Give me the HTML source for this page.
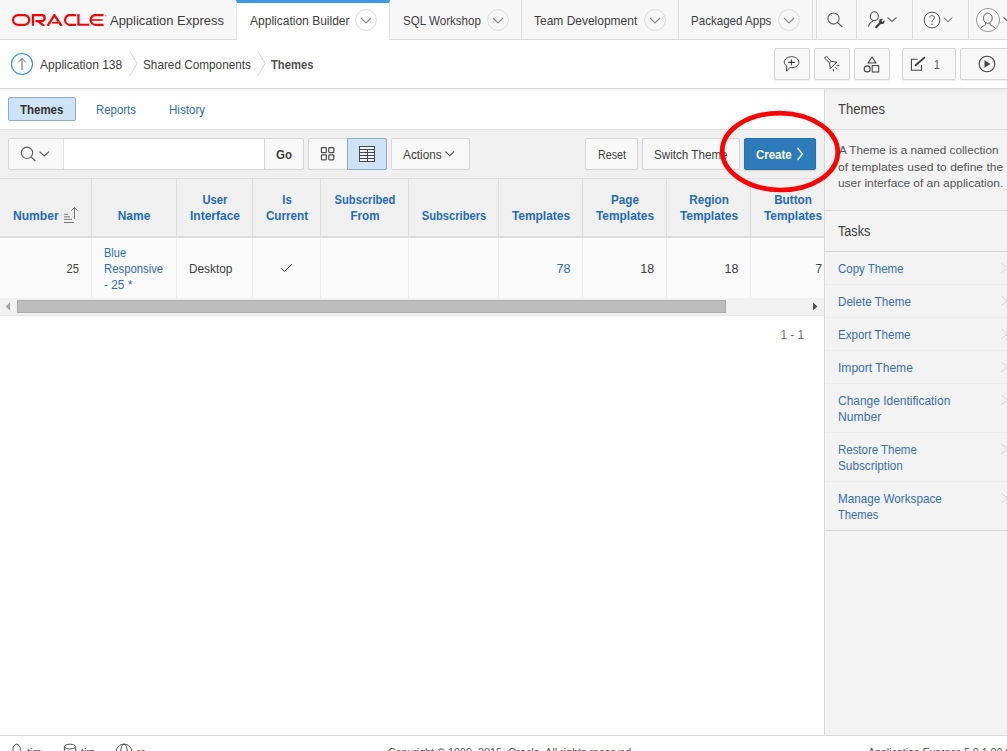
<!DOCTYPE html><html><head><meta charset="utf-8"><style>
html,body{margin:0;padding:0;width:1007px;height:751px;overflow:hidden;background:#fff;font-family:"Liberation Sans",sans-serif;}
.t{position:absolute;white-space:nowrap;}
.r{position:absolute;box-sizing:border-box;}
svg.r{overflow:visible}
</style></head><body>
<div class="r" style="left:0px;top:0px;width:1007px;height:40px;background:#f7f7f7;border-bottom:1px solid #dcdcdc"></div>
<svg class="r" style="left:12px;top:14px;" width="93" height="12" viewBox="0 0 93 12"><clipPath id="oc"><rect x="0" y="0" width="96" height="11.9"/></clipPath><g fill="none" stroke="#f80000" stroke-width="2.25" clip-path="url(#oc)">
<rect x="1.1" y="1.1" width="16.1" height="9.7" rx="5.2" ry="4.85"/>
<path d="M20.9 11.8 V1.05 H29.7 A2.975 2.975 0 0 1 29.7 7 H23.5"/>
<path d="M25.2 6.6 L32.2 11.8" stroke-width="2.3"/>
<path d="M35.6 11.8 L42.4 1.2 L49.6 11.8" stroke-width="2.4" stroke-linejoin="miter"/>
<path d="M40.2 8.75 H46.8" stroke-width="1.7"/>
<path d="M63.9 1.05 H57.9 A4.85 4.85 0 0 0 57.9 10.75 H63.9"/>
<path d="M66.45 0 V10.75 H77.2" stroke-width="2.2"/>
<path d="M91.6 1.05 H83.5 A4.85 4.85 0 0 0 83.5 10.75 H91.6"/>
<path d="M79.5 6 H90.6" stroke-width="1.6"/>
</g><circle cx="93.8" cy="1.8" r="0.8" fill="#f88"/></svg>
<div class="t" style="left:110.00px;top:14px;font-size:13.69px;line-height:13.69px;font-weight:400;color:#3d3d3d;transform:scaleX(0.9482);transform-origin:0 0;">Application Express</div>
<div class="r" style="left:236px;top:0px;width:154px;height:40px;background:#fff;border-top:3px solid #3b98e4;border-left:1px solid #e3e3e3;border-right:1px solid #e3e3e3"></div>
<div class="t" style="left:249.50px;top:15px;font-size:12.57px;line-height:12.57px;font-weight:400;color:#404040;transform:scaleX(0.9566);transform-origin:0 0;">Application Builder</div>
<svg class="r" style="left:353.8px;top:7.800000000000001px;" width="24" height="24" viewBox="0 0 24 24"><circle cx="12" cy="12" r="10.4" fill="none" stroke="#dcdcdc" stroke-width="1"/><path d="M7 10 L12 15 L17 10" fill="none" stroke="#8a8a8a" stroke-width="1.1"/></svg>
<div class="r" style="left:521px;top:0px;width:1px;height:39px;background:#dedede"></div>
<div class="r" style="left:678px;top:0px;width:1px;height:39px;background:#dedede"></div>
<div class="r" style="left:812px;top:0px;width:1px;height:39px;background:#dedede"></div>
<div class="r" style="left:816px;top:0px;width:1px;height:39px;background:#dedede"></div>
<div class="r" style="left:856px;top:0px;width:1px;height:39px;background:#dedede"></div>
<div class="r" style="left:912px;top:0px;width:1px;height:39px;background:#dedede"></div>
<div class="r" style="left:968px;top:0px;width:1px;height:39px;background:#dedede"></div>
<div class="t" style="left:402.70px;top:15px;font-size:12.57px;line-height:12.57px;font-weight:400;color:#404040;transform:scaleX(0.9227);transform-origin:0 0;">SQL Workshop</div>
<svg class="r" style="left:486px;top:7.800000000000001px;" width="24" height="24" viewBox="0 0 24 24"><circle cx="12" cy="12" r="10.4" fill="none" stroke="#dcdcdc" stroke-width="1"/><path d="M7 10 L12 15 L17 10" fill="none" stroke="#8a8a8a" stroke-width="1.1"/></svg>
<div class="t" style="left:534.10px;top:15px;font-size:12.57px;line-height:12.57px;font-weight:400;color:#404040;transform:scaleX(0.9539);transform-origin:0 0;">Team Development</div>
<svg class="r" style="left:642.9px;top:7.800000000000001px;" width="24" height="24" viewBox="0 0 24 24"><circle cx="12" cy="12" r="10.4" fill="none" stroke="#dcdcdc" stroke-width="1"/><path d="M7 10 L12 15 L17 10" fill="none" stroke="#8a8a8a" stroke-width="1.1"/></svg>
<div class="t" style="left:690.80px;top:15px;font-size:12.57px;line-height:12.57px;font-weight:400;color:#404040;transform:scaleX(0.9203);transform-origin:0 0;">Packaged Apps</div>
<svg class="r" style="left:777px;top:7.800000000000001px;" width="24" height="24" viewBox="0 0 24 24"><circle cx="12" cy="12" r="10.4" fill="none" stroke="#dcdcdc" stroke-width="1"/><path d="M7 10 L12 15 L17 10" fill="none" stroke="#8a8a8a" stroke-width="1.1"/></svg>
<svg class="r" style="left:825px;top:10px;" width="20" height="20" viewBox="0 0 20 20"><circle cx="8.5" cy="8.5" r="5.6" fill="none" stroke="#5a5a5a" stroke-width="1.05"/><path d="M12.5 12.5 L17.2 16.8" stroke="#5a5a5a" stroke-width="1.15"/></svg>
<svg class="r" style="left:866px;top:10px;" width="34" height="20" viewBox="0 0 34 20"><ellipse cx="8.4" cy="6.2" rx="4" ry="4.4" fill="none" stroke="#555" stroke-width="1.1"/><path d="M2.6 16.8 C2.8 13.6 4.6 12 7 11.2" fill="none" stroke="#555" stroke-width="1.1"/><path d="M10.3 17 L15 12.3" stroke="#3f3f3f" stroke-width="2.3" stroke-linecap="round"/><circle cx="15.8" cy="11.4" r="2.7" fill="#3f3f3f"/><path d="M15.9 11.3 L19 8.2" stroke="#f7f7f7" stroke-width="1.7"/><path d="M21.5 7.5 L26 11.5 L30.5 7.5" fill="none" stroke="#666" stroke-width="1.1"/></svg>
<svg class="r" style="left:920px;top:8px;" width="40" height="24" viewBox="0 0 40 24"><circle cx="12" cy="12" r="7.9" fill="none" stroke="#555" stroke-width="1"/><path d="M9.6 9.6 C9.6 6.9 14.4 6.9 14.4 9.6 C14.4 11.4 12 11.6 12 13.6 V14.3" fill="none" stroke="#555" stroke-width="1"/><circle cx="12" cy="16.3" r="0.7" fill="#555"/><path d="M23.8 9.5 L28 13.6 L32.3 9.5" fill="none" stroke="#555" stroke-width="1"/></svg>
<svg class="r" style="left:974px;top:6px;" width="40" height="28" viewBox="0 0 40 28"><circle cx="14" cy="14" r="11.6" fill="none" stroke="#9a9a9a" stroke-width="1"/><ellipse cx="13.8" cy="12.2" rx="4.4" ry="5.1" fill="none" stroke="#666" stroke-width="1"/><path d="M11.6 17 V18.6 C10.6 19.8 7.6 20.2 6.3 22.6 M16 17 V18.6 C17 19.8 20 20.2 21.3 22.6" fill="none" stroke="#666" stroke-width="1"/><path d="M29.5 11.5 L34 15.5 L38.5 11.5" fill="none" stroke="#666" stroke-width="1.1"/></svg>
<div class="r" style="left:0px;top:88px;width:1007px;height:1px;background:#d8d8d8"></div>
<div class="r" style="left:0px;top:89px;width:1007px;height:4px;background:linear-gradient(rgba(0,0,0,0.035),rgba(0,0,0,0))"></div>
<svg class="r" style="left:10px;top:52px;" width="24" height="24" viewBox="0 0 24 24"><circle cx="12" cy="12" r="10.5" fill="none" stroke="#3d95e0" stroke-width="1.2"/><path d="M12 18 V6.5 M8 10.5 L12 6.5 L16 10.5" fill="none" stroke="#666" stroke-width="1"/></svg>
<div class="t" style="left:40.00px;top:59px;font-size:12.57px;line-height:12.57px;font-weight:400;color:#404040;transform:scaleX(0.9574);transform-origin:0 0;">Application 138</div>
<svg class="r" style="left:128.5px;top:51px;" width="10" height="26" viewBox="0 0 10 26"><path d="M1 0.5 L8 12.5 L1 24.5" fill="none" stroke="#d6d6d6" stroke-width="1"/></svg>
<div class="t" style="left:143.00px;top:59px;font-size:12.57px;line-height:12.57px;font-weight:400;color:#404040;transform:scaleX(0.9367);transform-origin:0 0;">Shared Components</div>
<svg class="r" style="left:257px;top:51px;" width="10" height="26" viewBox="0 0 10 26"><path d="M1 0.5 L8 12.5 L1 24.5" fill="none" stroke="#d6d6d6" stroke-width="1"/></svg>
<div class="t" style="left:271.30px;top:59px;font-size:12.57px;line-height:12.57px;font-weight:700;color:#505050;transform:scaleX(0.8946);transform-origin:0 0;">Themes</div>
<div class="r" style="left:774px;top:48px;width:36px;height:32px;background:#f8f8f8;border:1px solid #d4d4d4;border-radius:2px;box-shadow:0 1px 1px rgba(0,0,0,0.06)"></div>
<div class="r" style="left:814px;top:48px;width:36px;height:32px;background:#f8f8f8;border:1px solid #d4d4d4;border-radius:2px;box-shadow:0 1px 1px rgba(0,0,0,0.06)"></div>
<div class="r" style="left:854px;top:48px;width:36px;height:32px;background:#f8f8f8;border:1px solid #d4d4d4;border-radius:2px;box-shadow:0 1px 1px rgba(0,0,0,0.06)"></div>
<div class="r" style="left:902px;top:48px;width:54px;height:32px;background:#f8f8f8;border:1px solid #d4d4d4;border-radius:2px;box-shadow:0 1px 1px rgba(0,0,0,0.06)"></div>
<div class="r" style="left:960px;top:48px;width:52px;height:32px;background:#f8f8f8;border:1px solid #d4d4d4;border-radius:2px;box-shadow:0 1px 1px rgba(0,0,0,0.06)"></div>
<svg class="r" style="left:780px;top:52px;" width="24" height="24" viewBox="0 0 24 24"><path d="M9.8 15.6 C10.4 15.7 11 15.7 11.6 15.7 C15.6 15.7 18.9 13.2 18.9 10.2 C18.9 7.2 15.6 4.7 11.6 4.7 C7.6 4.7 4.3 7.2 4.3 10.2 C4.3 11.8 5.3 13.1 6.8 14 L6.5 19.2 Z" fill="none" stroke="#444" stroke-width="1" stroke-linejoin="round"/><path d="M11.4 7.5 V13.2 M8.2 10.4 H14.7" stroke="#3a3a3a" stroke-width="1.1"/></svg>
<svg class="r" style="left:820px;top:52px;" width="24" height="24" viewBox="0 0 24 24"><path d="M4.3 6 L6.6 4.3 L11.2 9.4 L16.7 10.1 L10.3 16.5 L9.6 10.9 Z M9.6 10.9 L11.2 9.4" fill="none" stroke="#444" stroke-width="1" stroke-linejoin="round"/><path d="M16.5 13.2 L19.5 13.5 M15.3 15.2 L17.3 17.3 M13.2 17 L13.6 19.5" stroke="#444" stroke-width="1"/></svg>
<svg class="r" style="left:860px;top:52px;" width="24" height="24" viewBox="0 0 24 24"><path d="M12 5 L16 11 H8 Z" fill="none" stroke="#444" stroke-width="1.1" stroke-linejoin="round"/><circle cx="7.2" cy="16.9" r="3" fill="none" stroke="#444" stroke-width="1.1"/><rect x="12.2" y="13.6" width="6.5" height="6.4" fill="none" stroke="#444" stroke-width="1.1"/></svg>
<svg class="r" style="left:908px;top:52px;" width="24" height="24" viewBox="0 0 24 24"><path d="M9.6 7.3 H3.4 V18.3 H13.5 V12.9" fill="none" stroke="#444" stroke-width="1.1"/><path d="M7.6 13.3 L16.4 5.6" stroke="#3a3a3a" stroke-width="1.8" stroke-linecap="round"/></svg>
<div class="t" style="left:934.20px;top:59px;font-size:12.57px;line-height:12.57px;font-weight:400;color:#555;transform:scaleX(0.8153);transform-origin:0 0;">1</div>
<svg class="r" style="left:975px;top:52px;" width="24" height="24" viewBox="0 0 24 24"><circle cx="12" cy="12" r="7.8" fill="none" stroke="#444" stroke-width="1.1"/><path d="M9.5 8.3 L15.5 12 L9.5 15.7 Z" fill="#444"/></svg>
<div class="r" style="left:824px;top:89px;width:183px;height:646px;background:#f3f3f3;border-left:1px solid #d9d9d9"></div>
<div class="r" style="left:825px;top:89px;width:182px;height:4px;background:linear-gradient(rgba(0,0,0,0.035),rgba(0,0,0,0))"></div>
<div class="t" style="left:837.70px;top:102px;font-size:14.53px;line-height:14.53px;font-weight:400;color:#404040;transform:scaleX(0.8973);transform-origin:0 0;">Themes</div>
<div class="r" style="left:825px;top:129px;width:182px;height:1px;background:#dcdcdc"></div>
<div class="t" style="left:838.50px;top:145px;font-size:11.45px;line-height:11.45px;font-weight:400;color:#555;transform:scaleX(1.0249);transform-origin:0 0;">A Theme is a named collection</div>
<div class="t" style="left:837.50px;top:162px;font-size:11.45px;line-height:11.45px;font-weight:400;color:#555;transform:scaleX(1.0563);transform-origin:0 0;">of templates used to define the</div>
<div class="t" style="left:837.50px;top:178px;font-size:11.45px;line-height:11.45px;font-weight:400;color:#555;transform:scaleX(1.0394);transform-origin:0 0;">user interface of an application.</div>
<div class="r" style="left:825px;top:210px;width:182px;height:1px;background:#dcdcdc"></div>
<div class="t" style="left:837.70px;top:224px;font-size:14.25px;line-height:14.25px;font-weight:400;color:#404040;transform:scaleX(0.8867);transform-origin:0 0;">Tasks</div>
<div class="r" style="left:825px;top:251px;width:182px;height:1px;background:#d8d8d8"></div>
<div class="t" style="left:837.50px;top:263px;font-size:12.43px;line-height:12.43px;font-weight:400;color:#3a6eb5;transform:scaleX(0.9234);transform-origin:0 0;">Copy Theme</div>
<svg class="r" style="left:999px;top:260px;" width="10" height="16" viewBox="0 0 10 16"><path d="M2.4 3.2 L8.2 8 L2.4 12.7" fill="none" stroke="#d2d2d2" stroke-width="1"/></svg>
<div class="r" style="left:825px;top:284px;width:182px;height:1px;background:#ececec"></div>
<div class="t" style="left:837.50px;top:296px;font-size:12.43px;line-height:12.43px;font-weight:400;color:#3a6eb5;transform:scaleX(0.9364);transform-origin:0 0;">Delete Theme</div>
<svg class="r" style="left:999px;top:293px;" width="10" height="16" viewBox="0 0 10 16"><path d="M2.4 3.2 L8.2 8 L2.4 12.7" fill="none" stroke="#d2d2d2" stroke-width="1"/></svg>
<div class="r" style="left:825px;top:317px;width:182px;height:1px;background:#ececec"></div>
<div class="t" style="left:837.50px;top:329px;font-size:12.43px;line-height:12.43px;font-weight:400;color:#3a6eb5;transform:scaleX(0.9314);transform-origin:0 0;">Export Theme</div>
<svg class="r" style="left:999px;top:326px;" width="10" height="16" viewBox="0 0 10 16"><path d="M2.4 3.2 L8.2 8 L2.4 12.7" fill="none" stroke="#d2d2d2" stroke-width="1"/></svg>
<div class="r" style="left:825px;top:350px;width:182px;height:1px;background:#ececec"></div>
<div class="t" style="left:837.50px;top:362px;font-size:12.43px;line-height:12.43px;font-weight:400;color:#3a6eb5;transform:scaleX(0.9709);transform-origin:0 0;">Import Theme</div>
<svg class="r" style="left:999px;top:359px;" width="10" height="16" viewBox="0 0 10 16"><path d="M2.4 3.2 L8.2 8 L2.4 12.7" fill="none" stroke="#d2d2d2" stroke-width="1"/></svg>
<div class="r" style="left:825px;top:383px;width:182px;height:1px;background:#ececec"></div>
<div class="t" style="left:837.50px;top:395px;font-size:12.43px;line-height:12.43px;font-weight:400;color:#3a6eb5;transform:scaleX(0.9624);transform-origin:0 0;">Change Identification</div>
<div class="t" style="left:837.50px;top:411px;font-size:12.43px;line-height:12.43px;font-weight:400;color:#3a6eb5;transform:scaleX(0.9771);transform-origin:0 0;">Number</div>
<svg class="r" style="left:999px;top:392px;" width="10" height="16" viewBox="0 0 10 16"><path d="M2.4 3.2 L8.2 8 L2.4 12.7" fill="none" stroke="#d2d2d2" stroke-width="1"/></svg>
<div class="r" style="left:825px;top:432px;width:182px;height:1px;background:#ececec"></div>
<div class="t" style="left:837.50px;top:444px;font-size:12.43px;line-height:12.43px;font-weight:400;color:#3a6eb5;transform:scaleX(0.9223);transform-origin:0 0;">Restore Theme</div>
<div class="t" style="left:837.50px;top:460px;font-size:12.43px;line-height:12.43px;font-weight:400;color:#3a6eb5;transform:scaleX(0.9488);transform-origin:0 0;">Subscription</div>
<svg class="r" style="left:999px;top:441px;" width="10" height="16" viewBox="0 0 10 16"><path d="M2.4 3.2 L8.2 8 L2.4 12.7" fill="none" stroke="#d2d2d2" stroke-width="1"/></svg>
<div class="r" style="left:825px;top:481px;width:182px;height:1px;background:#ececec"></div>
<div class="t" style="left:837.50px;top:493px;font-size:12.43px;line-height:12.43px;font-weight:400;color:#3a6eb5;transform:scaleX(0.9418);transform-origin:0 0;">Manage Workspace</div>
<div class="t" style="left:837.50px;top:509px;font-size:12.43px;line-height:12.43px;font-weight:400;color:#3a6eb5;transform:scaleX(0.8997);transform-origin:0 0;">Themes</div>
<svg class="r" style="left:999px;top:490px;" width="10" height="16" viewBox="0 0 10 16"><path d="M2.4 3.2 L8.2 8 L2.4 12.7" fill="none" stroke="#d2d2d2" stroke-width="1"/></svg>
<div class="r" style="left:825px;top:530px;width:182px;height:1px;background:#d6d6d6"></div>
<div class="r" style="left:8px;top:97px;width:68px;height:24px;background:#cfe3f7;border:1px solid #8eabc8;border-radius:2px"></div>
<div class="t" style="left:20.00px;top:104px;font-size:12.57px;line-height:12.57px;font-weight:700;color:#333;transform:scaleX(0.9136);transform-origin:0 0;">Themes</div>
<div class="t" style="left:96.00px;top:104px;font-size:12.57px;line-height:12.57px;font-weight:400;color:#2f6db5;transform:scaleX(0.9088);transform-origin:0 0;">Reports</div>
<div class="t" style="left:169.30px;top:104px;font-size:12.57px;line-height:12.57px;font-weight:400;color:#2f6db5;transform:scaleX(0.9230);transform-origin:0 0;">History</div>
<div class="r" style="left:0px;top:129px;width:824px;height:49px;background:#f0f0f0;border-top:1px solid #e0e0e0"></div>
<div class="r" style="left:8px;top:138px;width:257px;height:32px;background:#fff;border:1px solid #d6d6d6;border-radius:2px 0 0 2px"></div>
<div class="r" style="left:9px;top:139px;width:55px;height:30px;background:#f8f8f8;border-right:1px solid #e0e0e0"></div>
<svg class="r" style="left:18px;top:144px;" width="30" height="20" viewBox="0 0 30 20"><circle cx="9" cy="8.8" r="5.7" fill="none" stroke="#5a5a5a" stroke-width="1.05"/><path d="M13 12.8 L17.3 17" stroke="#5a5a5a" stroke-width="1.15"/><path d="M21.5 7.6 L26.2 12 L30.9 7.6" fill="none" stroke="#555" stroke-width="1.1"/></svg>
<div class="r" style="left:264px;top:138px;width:40px;height:32px;background:#f8f8f8;border:1px solid #d6d6d6;border-radius:0 2px 2px 0"></div>
<div class="t" style="left:275.70px;top:149px;font-size:12.57px;line-height:12.57px;font-weight:700;color:#404040;transform:scaleX(0.9166);transform-origin:0 0;">Go</div>
<div class="r" style="left:308px;top:138px;width:79px;height:32px;background:#f8f8f8;border:1px solid #d6d6d6;border-radius:2px"></div>
<div class="r" style="left:347px;top:138px;width:40px;height:32px;background:#cfe3f7;border:1px solid #8eabc8;border-radius:0 2px 2px 0"></div>
<svg class="r" style="left:320px;top:146px;" width="16" height="16" viewBox="0 0 16 16"><rect x="1.4" y="1.6" width="5" height="5" rx="0.8" fill="none" stroke="#4d4d4d" stroke-width="1.2"/><rect x="8.8" y="1.6" width="5" height="5" rx="0.8" fill="none" stroke="#4d4d4d" stroke-width="1.2"/><rect x="1.4" y="8.9" width="5" height="5" rx="0.8" fill="none" stroke="#4d4d4d" stroke-width="1.2"/><rect x="8.8" y="8.9" width="5" height="5" rx="0.8" fill="none" stroke="#4d4d4d" stroke-width="1.2"/></svg>
<svg class="r" style="left:358px;top:145px;" width="18" height="18" viewBox="0 0 18 18"><rect x="1.5" y="1.5" width="15" height="15" fill="#eaf4fc" stroke="#484848" stroke-width="1"/><path d="M1.5 4.5 H16.5 M1.5 7.5 H16.5 M1.5 10.5 H16.5 M1.5 13.5 H16.5 M9.5 4.5 V16.5" stroke="#484848" stroke-width="1"/></svg>
<div class="r" style="left:391px;top:138px;width:79px;height:32px;background:#f8f8f8;border:1px solid #d6d6d6;border-radius:2px"></div>
<div class="t" style="left:403.30px;top:149px;font-size:12.57px;line-height:12.57px;font-weight:400;color:#404040;transform:scaleX(0.9413);transform-origin:0 0;">Actions</div>
<svg class="r" style="left:444px;top:149px;" width="12" height="10" viewBox="0 0 12 10"><path d="M1.5 2.5 L5.8 6.8 L10.1 2.5" fill="none" stroke="#555" stroke-width="1.1"/></svg>
<div class="r" style="left:585px;top:138px;width:53px;height:32px;background:#f8f8f8;border:1px solid #d6d6d6;border-radius:2px"></div>
<div class="t" style="left:597.90px;top:149px;font-size:12.57px;line-height:12.57px;font-weight:400;color:#404040;transform:scaleX(0.8557);transform-origin:0 0;">Reset</div>
<div class="r" style="left:642px;top:138px;width:98px;height:32px;background:#f8f8f8;border:1px solid #d6d6d6;border-radius:2px"></div>
<div class="t" style="left:653.90px;top:149px;font-size:12.57px;line-height:12.57px;font-weight:400;color:#404040;transform:scaleX(0.9268);transform-origin:0 0;">Switch Theme</div>
<div class="r" style="left:744px;top:138px;width:72px;height:32px;background:#2e7bbb;border:1px solid #2a70ab;border-radius:2px;box-shadow:0 1px 2px rgba(0,0,0,0.15)"></div>
<div class="t" style="left:755.90px;top:149px;font-size:12.57px;line-height:12.57px;font-weight:700;color:#fff;transform:scaleX(0.9098);transform-origin:0 0;">Create</div>
<svg class="r" style="left:795px;top:146px;" width="10" height="16" viewBox="0 0 10 16"><path d="M2.5 2 L7.5 8 L2.5 14" fill="none" stroke="#fff" stroke-width="1.3"/></svg>
<div class="r" style="left:0px;top:178px;width:824px;height:59px;background:#f0f0f0;border-top:1px solid #dedede"></div>
<div class="r" style="left:0px;top:236px;width:824px;height:2px;background:#dcdcdc"></div>
<div class="r" style="left:91px;top:179px;width:1px;height:57px;background:#dedede"></div>
<div class="r" style="left:176px;top:179px;width:1px;height:57px;background:#dedede"></div>
<div class="r" style="left:252px;top:179px;width:1px;height:57px;background:#dedede"></div>
<div class="r" style="left:320px;top:179px;width:1px;height:57px;background:#dedede"></div>
<div class="r" style="left:408px;top:179px;width:1px;height:57px;background:#dedede"></div>
<div class="r" style="left:498px;top:179px;width:1px;height:57px;background:#dedede"></div>
<div class="r" style="left:582px;top:179px;width:1px;height:57px;background:#dedede"></div>
<div class="r" style="left:666px;top:179px;width:1px;height:57px;background:#dedede"></div>
<div class="r" style="left:750px;top:179px;width:1px;height:57px;background:#dedede"></div>
<div class="r" style="left:0px;top:238px;width:824px;height:60px;background:#fafafa"></div>
<div class="r" style="left:91px;top:238px;width:1px;height:60px;background:#ececec"></div>
<div class="r" style="left:176px;top:238px;width:1px;height:60px;background:#ececec"></div>
<div class="r" style="left:252px;top:238px;width:1px;height:60px;background:#ececec"></div>
<div class="r" style="left:320px;top:238px;width:1px;height:60px;background:#ececec"></div>
<div class="r" style="left:408px;top:238px;width:1px;height:60px;background:#ececec"></div>
<div class="r" style="left:498px;top:238px;width:1px;height:60px;background:#ececec"></div>
<div class="r" style="left:582px;top:238px;width:1px;height:60px;background:#ececec"></div>
<div class="r" style="left:666px;top:238px;width:1px;height:60px;background:#ececec"></div>
<div class="r" style="left:750px;top:238px;width:1px;height:60px;background:#ececec"></div>
<div class="t" style="left:12.90px;top:210px;font-size:12.57px;line-height:12.57px;font-weight:700;color:#1f6bbd;transform:scaleX(0.9622);transform-origin:0 0;">Number</div>
<div class="t" style="left:-66.00px;width:400px;text-align:center;top:210px;font-size:12.43px;line-height:12.43px;font-weight:700;color:#1f6bbd;transform:scaleX(0.9659);transform-origin:50% 0;">Name</div>
<div class="t" style="left:14.50px;width:400px;text-align:center;top:194px;font-size:12.43px;line-height:12.43px;font-weight:700;color:#1f6bbd;transform:scaleX(0.9045);transform-origin:50% 0;">User</div>
<div class="t" style="left:14.50px;width:400px;text-align:center;top:210px;font-size:12.43px;line-height:12.43px;font-weight:700;color:#1f6bbd;transform:scaleX(0.9669);transform-origin:50% 0;">Interface</div>
<div class="t" style="left:86.50px;width:400px;text-align:center;top:194px;font-size:12.43px;line-height:12.43px;font-weight:700;color:#1f6bbd;transform:scaleX(0.9164);transform-origin:50% 0;">Is</div>
<div class="t" style="left:86.50px;width:400px;text-align:center;top:210px;font-size:12.43px;line-height:12.43px;font-weight:700;color:#1f6bbd;transform:scaleX(0.9379);transform-origin:50% 0;">Current</div>
<div class="t" style="left:164.50px;width:400px;text-align:center;top:194px;font-size:12.43px;line-height:12.43px;font-weight:700;color:#1f6bbd;transform:scaleX(0.8982);transform-origin:50% 0;">Subscribed</div>
<div class="t" style="left:164.50px;width:400px;text-align:center;top:210px;font-size:12.43px;line-height:12.43px;font-weight:700;color:#1f6bbd;transform:scaleX(0.9400);transform-origin:50% 0;">From</div>
<div class="t" style="left:253.50px;width:400px;text-align:center;top:210px;font-size:12.43px;line-height:12.43px;font-weight:700;color:#1f6bbd;transform:scaleX(0.9005);transform-origin:50% 0;">Subscribers</div>
<div class="t" style="left:340.50px;width:400px;text-align:center;top:210px;font-size:12.43px;line-height:12.43px;font-weight:700;color:#1f6bbd;transform:scaleX(0.9610);transform-origin:50% 0;">Templates</div>
<div class="t" style="left:424.50px;width:400px;text-align:center;top:194px;font-size:12.43px;line-height:12.43px;font-weight:700;color:#1f6bbd;transform:scaleX(0.9400);transform-origin:50% 0;">Page</div>
<div class="t" style="left:424.50px;width:400px;text-align:center;top:210px;font-size:12.43px;line-height:12.43px;font-weight:700;color:#1f6bbd;transform:scaleX(0.9610);transform-origin:50% 0;">Templates</div>
<div class="t" style="left:508.50px;width:400px;text-align:center;top:194px;font-size:12.43px;line-height:12.43px;font-weight:700;color:#1f6bbd;transform:scaleX(0.9400);transform-origin:50% 0;">Region</div>
<div class="t" style="left:508.50px;width:400px;text-align:center;top:210px;font-size:12.43px;line-height:12.43px;font-weight:700;color:#1f6bbd;transform:scaleX(0.9610);transform-origin:50% 0;">Templates</div>
<div class="t" style="left:592.50px;width:400px;text-align:center;top:194px;font-size:12.43px;line-height:12.43px;font-weight:700;color:#1f6bbd;transform:scaleX(0.9400);transform-origin:50% 0;">Button</div>
<div class="t" style="left:592.50px;width:400px;text-align:center;top:210px;font-size:12.43px;line-height:12.43px;font-weight:700;color:#1f6bbd;transform:scaleX(0.9610);transform-origin:50% 0;">Templates</div>
<svg class="r" style="left:62px;top:205px;" width="16" height="20" viewBox="0 0 16 20"><path d="M2 9.3 H6 M2 11.8 H8 M2 14.3 H10 M2 17.5 H12" stroke="#777" stroke-width="1"/><path d="M12.5 2.5 V14 M9.2 5.8 L12.5 2.5 L15.8 5.8" fill="none" stroke="#777" stroke-width="1"/></svg>
<div class="t" style="left:-321.50px;width:400px;text-align:right;top:263px;font-size:12.57px;line-height:12.57px;font-weight:400;color:#404040;transform:scaleX(0.8868);transform-origin:100% 0;">25</div>
<div class="t" style="left:104.30px;top:247px;font-size:12.57px;line-height:12.57px;font-weight:400;color:#2f6db5;transform:scaleX(0.8784);transform-origin:0 0;">Blue</div>
<div class="t" style="left:104.30px;top:263px;font-size:12.57px;line-height:12.57px;font-weight:400;color:#2f6db5;transform:scaleX(0.9013);transform-origin:0 0;">Responsive</div>
<div class="t" style="left:104.30px;top:279px;font-size:12.57px;line-height:12.57px;font-weight:400;color:#2f6db5;transform:scaleX(0.9419);transform-origin:0 0;">- 25 *</div>
<div class="t" style="left:188.90px;top:263px;font-size:12.57px;line-height:12.57px;font-weight:400;color:#404040;transform:scaleX(0.9412);transform-origin:0 0;">Desktop</div>
<svg class="r" style="left:279px;top:261px;" width="14" height="12" viewBox="0 0 14 12"><path d="M2.3 7.3 L5.5 10.5 L12.7 3.3" fill="none" stroke="#333" stroke-width="1"/></svg>
<div class="t" style="left:170.40px;width:400px;text-align:right;top:263px;font-size:12.57px;line-height:12.57px;font-weight:400;color:#2f6db5;transform-origin:100% 0;">78</div>
<div class="t" style="left:254.30px;width:400px;text-align:right;top:263px;font-size:12.57px;line-height:12.57px;font-weight:400;color:#404040;transform-origin:100% 0;">18</div>
<div class="t" style="left:338.40px;width:400px;text-align:right;top:263px;font-size:12.57px;line-height:12.57px;font-weight:400;color:#404040;transform-origin:100% 0;">18</div>
<div class="t" style="left:421.60px;width:400px;text-align:right;top:263px;font-size:12.57px;line-height:12.57px;font-weight:400;color:#404040;transform:scaleX(0.9300);transform-origin:100% 0;">7</div>
<div class="r" style="left:0px;top:298px;width:824px;height:17px;background:#f1f1f1"></div>
<div class="r" style="left:17px;top:300px;width:709px;height:13px;background:#bdbdbd;border:1px solid #aaaaaa"></div>
<svg class="r" style="left:4px;top:302px;" width="8" height="9" viewBox="0 0 8 9"><path d="M6 0.5 V8.5 L1.5 4.5 Z" fill="#a3a3a3"/></svg>
<svg class="r" style="left:811px;top:302px;" width="8" height="9" viewBox="0 0 8 9"><path d="M2 0.5 V8.5 L6.5 4.5 Z" fill="#505050"/></svg>
<div class="r" style="left:0px;top:315px;width:824px;height:1px;background:#e3e3e3"></div>
<div class="t" style="left:403.60px;width:400px;text-align:right;top:329px;font-size:12.57px;line-height:12.57px;font-weight:400;color:#707070;transform:scaleX(0.9383);transform-origin:100% 0;">1 - 1</div>
<div class="r" style="left:0px;top:735px;width:1007px;height:1px;background:#d9d9d9"></div>
<svg class="r" style="left:10px;top:743px;" width="14" height="12" viewBox="0 0 14 12"><ellipse cx="6.6" cy="6.2" rx="3.7" ry="5" fill="none" stroke="#555" stroke-width="1"/></svg>
<div class="t" style="left:27.00px;top:747px;font-size:11.17px;line-height:11.17px;font-weight:400;color:#555;transform:scaleX(0.9805);transform-origin:0 0;">tim</div>
<svg class="r" style="left:63px;top:743px;" width="16" height="12" viewBox="0 0 16 12"><ellipse cx="7" cy="3.6" rx="5.6" ry="2.4" fill="none" stroke="#555" stroke-width="1"/><path d="M1.4 3.6 V12 M12.6 3.6 V12" stroke="#555" stroke-width="1"/></svg>
<div class="t" style="left:81.00px;top:747px;font-size:11.17px;line-height:11.17px;font-weight:400;color:#555;transform:scaleX(0.9604);transform-origin:0 0;">tim</div>
<svg class="r" style="left:115px;top:743px;" width="20" height="12" viewBox="0 0 20 12"><circle cx="9" cy="9" r="7.9" fill="none" stroke="#555" stroke-width="1"/><ellipse cx="9" cy="9" rx="3.3" ry="7.9" fill="none" stroke="#555" stroke-width="1"/></svg>
<div class="t" style="left:135.80px;top:747px;font-size:11.17px;line-height:11.17px;font-weight:400;color:#555;transform:scaleX(0.7726);transform-origin:0 0;">en</div>
<div class="t" style="left:387.70px;top:747px;font-size:11.17px;line-height:11.17px;font-weight:400;color:#555;transform:scaleX(0.9658);transform-origin:0 0;">Copyright © 1999, 2015, Oracle. All rights reserved.</div>
<div class="t" style="left:867.70px;top:747px;font-size:11.17px;line-height:11.17px;font-weight:400;color:#555;transform:scaleX(0.9500);transform-origin:0 0;">Application Express 5.0.1.00.03</div>
<svg class="r" style="left:700px;top:100px;" width="160" height="110" viewBox="0 0 160 110"><ellipse cx="80" cy="51.6" rx="57.8" ry="38.4" fill="none" stroke="#f00" stroke-width="4.7" transform="rotate(1 80 51.6)"/></svg>
</body></html>
